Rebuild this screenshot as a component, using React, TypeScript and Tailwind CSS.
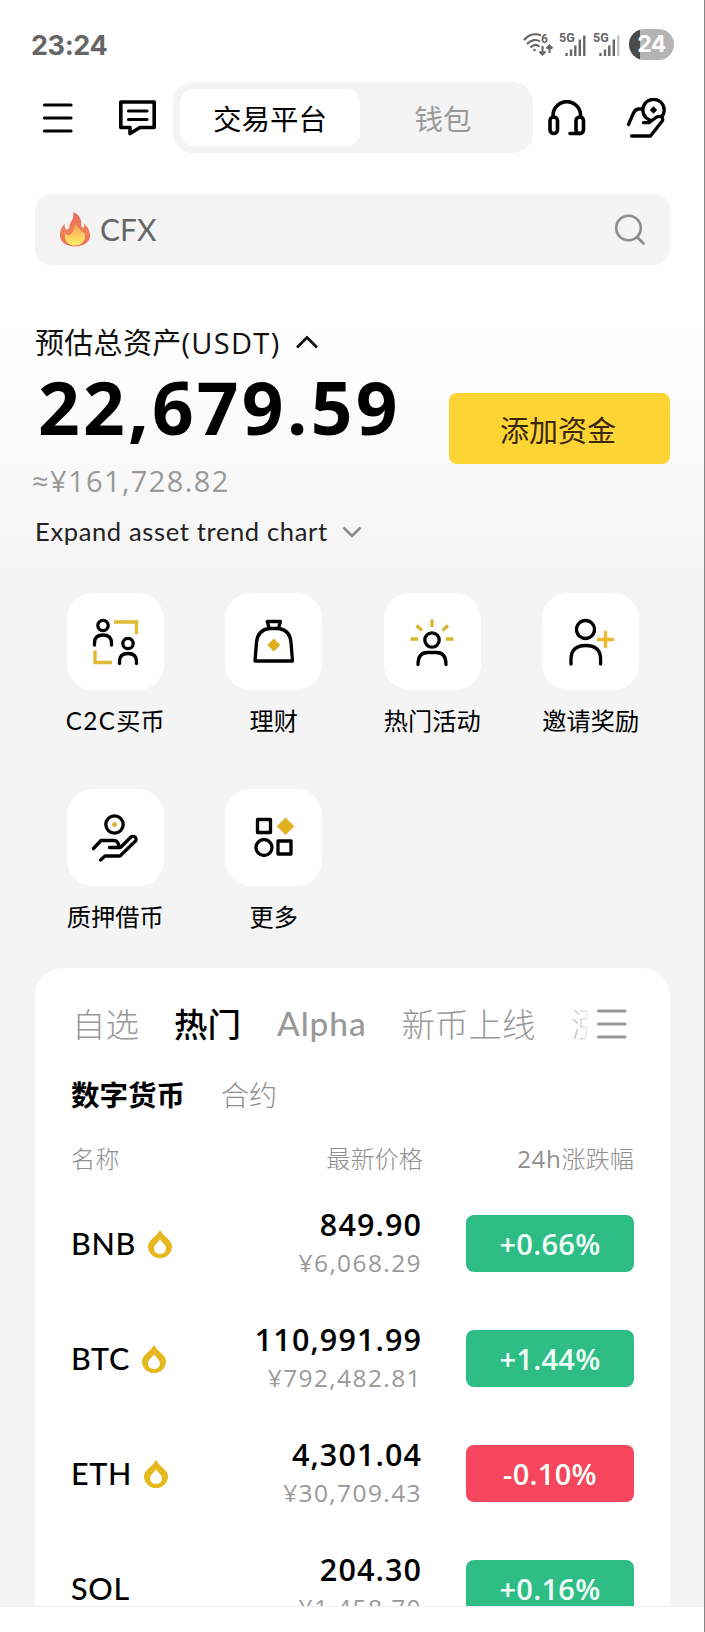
import type { ReactNode } from "react";
import clsx from "clsx";

interface Coin { name: string; price: string; cny: string; change: string; hot?: boolean }

const coins: Coin[] = [
  { name: "BNB", price: "849.90", cny: "¥6,068.29", change: "+0.66%", hot: true },
  { name: "BTC", price: "110,991.99", cny: "¥792,482.81", change: "+1.44%", hot: true },
  { name: "ETH", price: "4,301.04", cny: "¥30,709.43", change: "-0.10%", hot: true },
  { name: "SOL", price: "204.30", cny: "¥1,458.70", change: "+0.16%" },
];

function MenuLines({ className }: { className: string }) {
  return (
    <svg viewBox="0 0 31 32" className={className} fill="none" stroke="currentColor" strokeWidth="3.2" strokeLinecap="round">
      <path d="M2.500 3h26.500M2.500 16h26.500M2.500 29h26.500" />
    </svg>
  );
}

// Mobile signal: five bars, the last one greyed out when the signal is weak.
function Signal({ weak = false }: { weak?: boolean }) {
  return (
    <svg viewBox="0 0 28 26" className="h-[26px] w-7" stroke="currentColor" strokeWidth="2.400">
      <text x="0" y="11" fontSize="12.500" fontWeight="700" fontFamily="Roboto" fill="currentColor" stroke="none">5G</text>
      <path d="M7.500 25v-3M12 25v-6.500M16.300 25V14.500M20.800 25V8.500" />
      <path d="M25.300 25V4.500" stroke={weak ? "#c4c4c4" : "currentColor"} />
    </svg>
  );
}

function StatusBar() {
  return (
    <div className="flex h-[82px] items-center justify-between pt-[6px] pr-[30px] pl-[31px] text-[#666]">
      <span className="mt-1 font-['Inter'] text-[27px] font-bold tracking-[-0.4px]">23:24</span>
      <div className="flex items-center gap-[6px]">
        <svg viewBox="0 0 30 26" className="h-[26px] w-[30px]" fill="none" stroke="currentColor" strokeWidth="2.100">
          <path d="M1 9C6 3 13 2 18 4.500M4 13c4-4.500 9.500-5 13-2.500M7.500 16.500c3-3 6.500-3 9-.8" />
          <circle cx="11.500" cy="19" r="1.300" fill="currentColor" stroke="none" />
          <path d="M19.500 15v8M16.500 20.500l3 3 3-3M26.500 22v-7M23.500 17.500l3-3 3 3" />
          <text x="18" y="12" fontSize="12" fontWeight="700" fontFamily="Roboto" fill="currentColor" stroke="none">6</text>
        </svg>
        <Signal />
        <Signal weak />
        <div className="ml-[2px] flex h-[31px] w-[45px] items-center justify-center rounded-full bg-linear-to-r from-[#4a4a4a] from-[24%] to-[#b4b4b4] to-[24%] font-['Inter'] text-[23px] leading-[31px] font-bold tracking-[-0.500px] text-white">24</div>
      </div>
    </div>
  );
}

function TopNav() {
  return (
    <header className="flex h-[71px] items-center pl-[42px]">
      <MenuLines className="h-8 w-[31px]" />
      <svg viewBox="0 0 38 38" className="ml-[45px] h-[38px] w-[38px]" fill="none" stroke="#000" strokeWidth="3.600" strokeLinejoin="round" strokeLinecap="round">
        <path d="M2.800 3h33.400v25.500H22L12 34.500v-6H2.800Z" />
        <path strokeWidth="3.200" d="M10.500 12h18.500M10.500 20.500h18.500" />
      </svg>
      <div className="ml-[17px] flex h-[71px] w-[360px] rounded-[20px] bg-[#f4f4f4] p-[7px] text-[28.500px]">
        <button className="w-[180px] rounded-[14px] bg-white pt-[3px]">交易平台</button>
        <button className="flex-1 pt-[3px] text-[#999]">钱包</button>
      </div>
      <svg viewBox="0 0 38 36" className="ml-[15px] h-9 w-[38px]" fill="none" stroke="#000" strokeWidth="3.600" strokeLinecap="round">
        <rect x="2" y="17" width="7.500" height="16.500" rx="3.700" />
        <rect x="28" y="17" width="7.500" height="16.500" rx="3.700" />
        <path d="M5 17v-1.500a13.800 13.800 0 0 1 27.600 0V17M32 33.500H22" />
      </svg>
      <svg viewBox="0 0 42 40" className="ml-10 h-10 w-[42px]" fill="none" stroke="#000" strokeWidth="3.300" strokeLinecap="round" strokeLinejoin="round">
        <path d="M2.500 26.500 7.500 15q1.500-3.500 5-4l3.500-.2" />
        <circle cx="27.500" cy="12" r="10.700" />
        <path d="m27.500 8.300 3.700 3.700-3.700 3.700-3.700-3.700Z" fill="#000" stroke="none" />
        <path d="M17.500 24.700h5.500l7.300-5.500q4.200-2 6 .6 1 1.600-.3 3.500L24.500 38H5.500" fill="#fff" stroke="none" />
        <path d="M17.500 24.700h5.500l7.300-5.500q4.200-2 6 .6 1 1.600-.3 3.500L24.500 38H5.500" />
      </svg>
    </header>
  );
}

function SearchBar() {
  return (
    <div className="mt-[41px] mr-[34px] ml-[35px] flex h-[71px] items-center rounded-[16px] bg-[#f4f4f4] pr-[24px] pl-6">
      <svg viewBox="0 0 32 36" className="h-[35px] w-8">
        <defs>
          <linearGradient id="flame" x1="0" y1="0" x2="0" y2="1">
            <stop offset="0" stopColor="#e8695c" />
            <stop offset=".6" stopColor="#f0815c" />
            <stop offset="1" stopColor="#ee6355" />
          </linearGradient>
          <linearGradient id="core" x1="0" y1="0" x2="0" y2="1">
            <stop offset="0" stopColor="#f6a24f" />
            <stop offset="1" stopColor="#fff06a" />
          </linearGradient>
        </defs>
        <path fill="url(#flame)" d="M14 0c6 2.500 9 7 8.500 14 .2 2 1.500 3 2.500 1.500.6-1 .6-2.500.2-3.800C29 15 31.500 19 31.500 24c0 6.500-6 11.500-15.500 11.500S.5 30.500.5 23.500c0-4.500 1.800-8.500 5-11.500-.4 3 .2 5.500 2 6 2 .3 2.300-2 3-4.500C12 9 15.500 6 14 0Z" />
        <path fill="url(#core)" d="M17 12c1.500 4 6.500 8.500 9 10 2 7-3 12.500-10 12.500S4 29.500 6 22c2 2.500 4.500 2.500 6.500 0 2.500-3 2.500-7 4.500-10Z" />
      </svg>
      <span className="ml-[9px] font-['Lato'] text-[30px] text-[#666]">CFX</span>
      <svg viewBox="0 0 32 32" className="ml-auto h-8 w-8" fill="none" stroke="#8c8c8c" strokeWidth="2.600" strokeLinecap="round">
        <circle cx="14.500" cy="14" r="12.300" />
        <path d="m23.500 23.500 6 6" />
      </svg>
    </div>
  );
}

function Balance() {
  return (
    <section className="flex h-[310px] justify-between bg-linear-to-b from-white from-20% to-[#f4f4f4] pr-[34px] pl-[35px]">
      <div className="pt-[60px] whitespace-nowrap">
        <div className="flex h-9 items-center text-[29px] text-[#111]">
          <span className="tracking-[0.300px]">预估总资产</span><span className="tracking-[1.300px]">(USDT)</span>
          <svg viewBox="0 0 24 14" className="mb-[3px] ml-[15px] h-[14px] w-6" fill="none" stroke="currentColor" strokeWidth="2.800"><path d="m2 12.500 10-10 10 10" /></svg>
        </div>
        <div className="flex h-[92px] items-center pl-[3px] text-[73px] font-bold tracking-[3.200px]">22,679.59</div>
        <div className="-ml-[3px] flex h-[55px] items-center pt-px text-[29px] tracking-[1.400px] text-[#999]">≈¥161,728.82</div>
        <div className="flex h-[46px] items-center pt-px font-['Lato'] text-[25.500px] tracking-[0.650px] text-[#222]">
          Expand asset trend chart
          <svg viewBox="0 0 20 12" className="ml-[14px] h-3 w-5" fill="none" stroke="#8c8c8c" strokeWidth="2.600"><path d="m1.500 1.500 8.500 8.500 8.500-8.500" /></svg>
        </div>
      </div>
      <button className="mt-[128px] h-[71px] w-[221px] rounded-[8px] bg-[#fcd535] pt-1 pr-[3px] text-[29px] text-[#3b270b]">添加资金</button>
    </section>
  );
}

function Shortcut({ label, children }: { label: ReactNode; children: ReactNode }) {
  return (
    <div className="flex h-[196px] flex-col items-center">
      <div className="flex h-[97px] w-[97px] items-center justify-center rounded-[26px] bg-white">
        <svg viewBox="0 0 50 50" className="h-[50px] w-[50px]" fill="none" stroke="#000" strokeWidth="3.300" strokeLinecap="round" strokeLinejoin="round">
          {children}
        </svg>
      </div>
      <span className="mt-[13px] text-[24.200px] leading-9 whitespace-nowrap">{label}</span>
    </div>
  );
}

function Shortcuts() {
  return (
    <section className="mr-[34px] ml-9 grid h-[393px] grid-cols-4 content-start pt-[18px]">
      <Shortcut label={<><span className="font-['Lato'] tracking-[1.400px]">C2C</span>买币</>}>
        <circle cx="13" cy="8.500" r="5.200" />
        <path d="M4.500 28v-2q0-8 8.500-8t8.500 8v2" />
        <circle cx="38" cy="26.500" r="5.200" />
        <path d="M29.500 46.500v-2q0-8 8.500-8t8.500 8v2" />
        <path stroke="#e0ba34" strokeLinecap="butt" strokeLinejoin="miter" d="M24 5h22.500V17M5 33.500v12h17" />
      </Shortcut>
      <Shortcut label="理财">
        <path d="M18.200 4.500h13.200l-1.900 7h-9.200ZM20.300 11.500Q8.500 13 7.500 25.500L6 44h37.500L42 25.500Q41 13 29.500 11.500" />
        <path d="m24.800 21.500 6.500 6.500-6.500 6.500-6.500-6.500Z" fill="#e0ae20" stroke="none" />
      </Shortcut>
      <Shortcut label="热门活动">
        <circle cx="25" cy="23" r="7.200" />
        <path d="M11 47.500q0-12 9.500-12h9q9.500 0 9.500 12" />
        <path stroke="#d9b535" strokeLinecap="butt" d="M25 2.500v7.500M9.500 8.500 15 13.500M41 8.500 35.500 13.500M3.500 22H11M39 22h7.500" />
      </Shortcut>
      <Shortcut label="邀请奖励">
        <circle cx="19.500" cy="12.500" r="9" />
        <path d="M5 47v-4.500Q5 28.500 19.800 28.500T34.600 42.500V47" />
        <path stroke="#f0b92d" strokeLinecap="butt" d="M39.500 14v17M31 22.500h17" />
      </Shortcut>
      <Shortcut label="质押借币">
        <circle cx="24.500" cy="11.500" r="8.700" />
        <path d="m24.500 8.500 3 3-3 3-3-3Z" fill="#e0ae20" stroke="none" />
        <path d="m3.500 35.500 7.500-8h13q4.500 0 5 7H19.500h11L41.500 23.500q5-1 4.500 4L30 43H15l-4.500 4" />
      </Shortcut>
      <Shortcut label="更多">
        <path d="M8.500 6.500h13v13h-13ZM29 28h13v13H29Z" />
        <circle cx="15" cy="34.500" r="8" />
        <path d="m36.500 4.500 8.800 8.800-8.800 8.700-8.800-8.700Z" fill="#e0b020" stroke="none" />
      </Shortcut>
    </section>
  );
}

function CoinRow({ coin }: { coin: Coin }) {
  return (
    <div className="flex h-[115px] shrink-0 items-center">
      <span className="pb-px font-['Lato'] text-[30.500px] leading-[40px] font-medium tracking-[0.700px]">{coin.name}</span>
      {coin.hot && (
        <svg viewBox="0 0 24 28" className="ml-3 h-7 w-6">
          <path fill="#e5b820" fillRule="evenodd" d="M12 0q2.500 4.500 7 8c3 2.500 5 5 5 8.500A12 11.500 0 0 1 0 16.500C0 13 2 10.500 5 8q4.500-3.500 7-8Zm0 9.500q-2 2.800-4 4.500-2 2-2 4.500a6 5.500 0 0 0 12 0q0-2.500-2-4.500-2-1.700-4-4.500Z" />
        </svg>
      )}
      <div className="ml-auto flex flex-col items-end">
        <span className="text-[30.500px] leading-[39px] font-semibold tracking-[1.100px]">{coin.price}</span>
        <span className="text-[24.500px] leading-[38px] tracking-[1.400px] text-[#999]">{coin.cny}</span>
      </div>
      <span className={clsx("ml-11 flex h-[57px] w-[168px] items-center justify-center rounded-[8px] text-[29px] font-semibold tracking-[0.300px] text-[#f2fff9]", coin.change.startsWith("-") ? "bg-[#f6465d]" : "bg-[#2ebd85]")}>
        {coin.change}
      </span>
    </div>
  );
}

function Markets() {
  return (
    <section className="mr-[34px] ml-[35px] flex h-[638px] flex-col overflow-hidden rounded-t-[28px] bg-white px-[36px] whitespace-nowrap">
      <nav className="mt-[23px] flex h-[67px] shrink-0 items-center text-[33.500px] text-[#999]">
        <span className="pl-px font-light">自选</span>
        <span className="ml-[35px] font-medium text-black">热门</span>
        <span className="ml-9 pb-[3px] font-['Lato'] text-[33.500px] font-medium tracking-[0.900px]">Alpha</span>
        <span className="ml-[35px] font-light">新币上线</span>
        <span className="ml-9 w-[16px] overflow-hidden bg-linear-to-r from-[#bbb] to-[#eee] bg-clip-text font-light text-transparent">涨</span>
        <MenuLines className="mr-[7px] mb-[2px] ml-auto h-8 w-[31px]" />
      </nav>
      <nav className="flex h-[74px] shrink-0 items-center text-[28.500px]">
        <span className="font-bold">数字货币</span>
        <span className="ml-9 text-[28px] font-light text-[#8f8f8f]">合约</span>
      </nav>
      <div className="flex h-[54px] shrink-0 items-center text-[24.200px] font-light text-[#8f8f8f]">
        <span>名称</span>
        <span className="ml-auto">最新价格</span>
        <span className="w-[211px] text-right"><span className="font-normal tracking-[0.600px]">24h</span>涨跌幅</span>
      </div>
      {coins.map((coin) => <CoinRow key={coin.name} coin={coin} />)}
    </section>
  );
}

export default function App() {
  return (
    <main className="h-[1632px] w-[705px] overflow-hidden border-r border-[#858585] bg-white font-['Open_Sans','Noto_Sans_CJK_SC',sans-serif] text-black">
      <StatusBar />
      <TopNav />
      <SearchBar />
      <Balance />
      <div className="h-[1031px] bg-[#f4f4f4]">
        <Shortcuts />
        <Markets />
      </div>
      <footer className="h-[26px] border-t border-[#f0f0f0] bg-white" />
    </main>
  );
}
